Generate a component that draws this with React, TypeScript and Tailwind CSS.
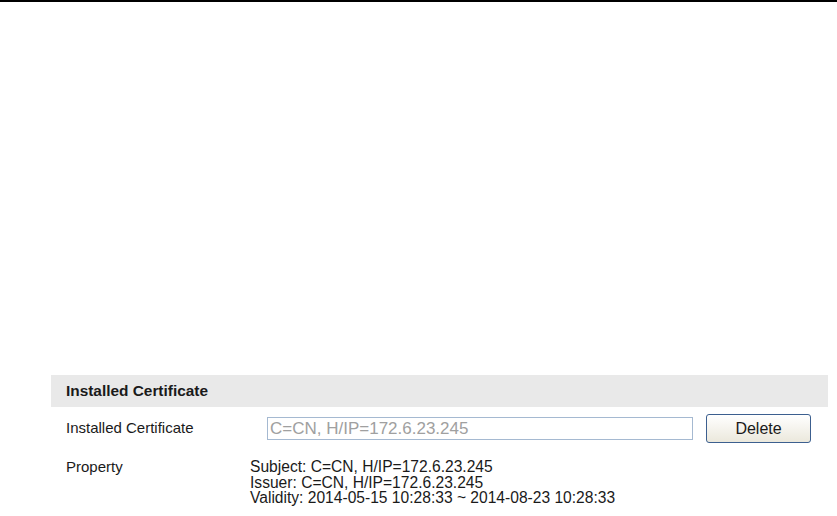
export default function App() {
    return (
        <div className="w-[837px] h-[516px] bg-white overflow-hidden font-['Liberation_Sans',Arial,sans-serif] text-[15px] text-[#1a1a1a]">
            {/* top rule */}
            <div className="h-[2px] bg-black" />

            <div className="ml-[51px] mt-[373px] w-[777px]">
                {/* section header */}
                <div className="h-[32px] bg-[#e9e9e9] flex items-center pl-[15px] font-bold text-[15.4px]">
                    Installed Certificate
                </div>

                {/* certificate row */}
                <div className="mt-[7px] flex items-center h-[29px]">
                    <div className="w-[216px] pl-[15px]">Installed Certificate</div>
                    <div className="w-[426px] h-[23px] border border-[#a5b9d1] flex items-center pl-[2px] text-[17px] text-[#a0a0a0]">
                        C=CN, H/IP=172.6.23.245
                    </div>
                    <button className="ml-[13px] w-[105px] h-[29px] rounded-[3px] border border-[#3c5f8f] bg-gradient-to-b from-white to-[#ebe8dc] flex items-center justify-center text-[16px] text-[#1a1a1a]">
                        Delete
                    </button>
                </div>

                {/* property row */}
                <div className="mt-[16px] flex leading-[15.7px]">
                    <div className="w-[199px] pl-[15px]">Property</div>
                    <div className="flex flex-col text-[15.6px]">
                        <span>Subject: C=CN, H/IP=172.6.23.245</span>
                        <span>Issuer: C=CN, H/IP=172.6.23.245</span>
                        <span>Validity: 2014-05-15 10:28:33 ~ 2014-08-23 10:28:33</span>
                    </div>
                </div>
            </div>
        </div>
    );
}
